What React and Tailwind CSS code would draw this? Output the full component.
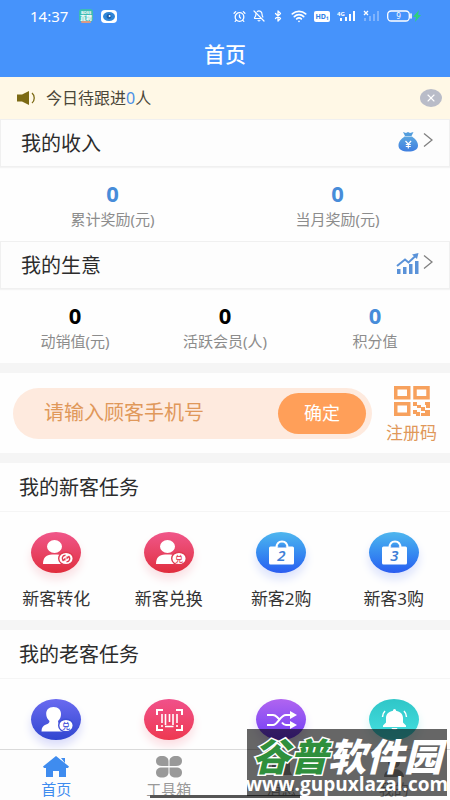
import { useState } from "react";
import { AlarmClock, BellOff, Bluetooth, Wifi, X } from "lucide-react";
import clsx from "clsx";

function StatusBar() {
    return (
        <div className="flex h-8 items-center justify-between pl-[30px] pr-7">
            <div className="flex items-center">
                <span className="w-[49px] text-[15px] leading-5">14:37</span>
                <svg className="h-[14px] w-[14px]" viewBox="0 0 14 14">
                    <rect width="14" height="13" rx="3" fill="#3cbcb4" />
                    <rect x="2" y="12" width="10" height="2" rx="1" fill="#d99a86" />
                    <text x="7" y="5" textAnchor="middle" fontSize="4" fontWeight="700" fill="#fff">BOSS</text>
                    <text x="7" y="11" textAnchor="middle" fontSize="6" fontWeight="700" fill="#fff">直聘</text>
                </svg>
                <svg className="ml-2 h-[13px] w-4" viewBox="0 0 16 13">
                    <rect width="16" height="13" rx="4" fill="#fff" />
                    <ellipse cx="8" cy="6.5" rx="6" ry="4.5" fill="#2f86d8" />
                    <circle cx="8" cy="6.5" r="2.4" fill="#1b5ca8" />
                    <circle cx="8.6" cy="6" r="1" fill="#fff" />
                </svg>
            </div>
            <div className="flex items-center gap-[7px]">
                <AlarmClock className="h-[13px] w-[13px]" strokeWidth={2.4} />
                <BellOff className="h-3 w-3" strokeWidth={2.4} />
                <Bluetooth className="h-3 w-3" strokeWidth={2.6} />
                <Wifi className="h-4 w-4" strokeWidth={2.6} />
                <svg className="h-[11px] w-4" viewBox="0 0 16 11">
                    <rect width="16" height="11" rx="2" fill="#fff" />
                    <text x="8" y="8" textAnchor="middle" fontSize="7" fontWeight="700" fill="#2f7fe8">HD₁</text>
                </svg>
                <svg className="h-3 w-[19px]" viewBox="0 0 19 12" fill="#fff">
                    <text x="0" y="6" fontSize="6" fontWeight="700">4G</text>
                    <rect x="3" y="8" width="2" height="3" />
                    <rect x="8" y="7" width="2" height="4" />
                    <rect x="12" y="4" width="2" height="7" />
                    <rect x="16" y="1" width="2" height="10" />
                </svg>
                <svg className="h-3 w-[17px]" viewBox="0 0 17 12">
                    <path d="M1 1l4 4M5 1l-4 4" stroke="#fff" strokeWidth="1.3" />
                    <g fill="#7fb3fc">
                        <rect x="1" y="8" width="2" height="3" />
                        <rect x="6" y="6" width="2" height="5" />
                        <rect x="10" y="4" width="2" height="7" />
                        <rect x="14" y="1" width="2" height="10" />
                    </g>
                </svg>
                <svg className="h-3 w-[35px]" viewBox="0 0 35 12">
                    <rect x="0.7" y="1" width="21.6" height="10" rx="3.5" fill="none" stroke="#fff" strokeWidth="1.3" />
                    <path d="M24 4v4" stroke="#fff" strokeWidth="1.6" strokeLinecap="round" />
                    <text x="11.5" y="9" textAnchor="middle" fontSize="8" fill="#fff">9</text>
                    <path d="M32 0l-6 7h3l-1 5 6-7h-3z" fill="#2fd07d" />
                </svg>
            </div>
        </div>
    );
}

function MoneyBagIcon() {
    return (
        <svg className="h-[21px] w-[23px]" viewBox="0 0 23 21">
            <defs>
                <linearGradient id="bag" x1="0" y1="0" x2="0" y2="1">
                    <stop offset="0" stopColor="#5ba5e0" />
                    <stop offset="1" stopColor="#3f7fe0" />
                </linearGradient>
            </defs>
            <path d="M7 1l3 1 2-1 2 1 3.5-1-2 4H9z" fill="#529ddd" />
            <path d="M8.5 5.6h7.500C19 8 22 10.500 22 14.500c0 4-4 6-9.800 6S2.500 18.500 2.500 14.500c0-4 3-6.500 6-8.900z" fill="url(#bag)" />
            <path d="M9.500 10l2.800 3 2.800-3M12.300 13v4.500M9.800 13.500h5M9.800 15.500h5" fill="none" stroke="#fff" strokeWidth="1.2" />
        </svg>
    );
}

function ChartIcon() {
    return (
        <svg className="h-[21px] w-[23px]" viewBox="0 0 23 21" fill="#5a92d8">
            <rect x="1" y="16" width="3.5" height="5" />
            <rect x="7" y="14" width="3.5" height="7" />
            <rect x="13" y="11" width="3.5" height="10" />
            <rect x="19" y="8" width="3.5" height="13" />
            <path d="M1 13l8-6.500 3.500 3 7-6.500" fill="none" stroke="#5a92d8" strokeWidth="2" />
            <path d="M16 1.500L22.500 0 21 6z" />
        </svg>
    );
}

function PanelHeader({ title, icon }) {
    return (
        <a
            href="#"
            className="flex h-12 items-center justify-between border border-[#f0f0f0] bg-[#fdfdfd] pl-5 pr-4 shadow-[0_1px_1px_#f4f4f4]"
        >
            <h2 className="pt-[2px] text-[20px] leading-6 text-[#2c2c2c]">{title}</h2>
            <span className="flex items-center gap-1 pb-1">
                {icon}
                <svg className="mb-[2px] h-4 w-[10px]" viewBox="0 0 10 16">
                    <path d="M1 1.500l8 6.500-8 6.500" fill="none" stroke="#808080" strokeWidth="1.3" />
                </svg>
            </span>
        </a>
    );
}

function Stat({ value, label, dark }) {
    return (
        <div className="flex flex-1 flex-col items-center">
            <dd className={clsx("text-[22px] font-bold leading-7", dark ? "text-black" : "text-[#478cd9]")}>{value}</dd>
            <dt className="order-last text-[15px] leading-6 text-[#8c8c8c]">{label}</dt>
        </div>
    );
}

function QrIcon() {
    return (
        <svg className="h-[30px] w-9" viewBox="0 0 36 30">
            <g fill="none" stroke="#f7a15d" strokeWidth="3.5">
                <rect x="1.75" y="1.75" width="13" height="10" />
                <rect x="21" y="1.75" width="13" height="10" />
                <rect x="1.75" y="17.75" width="13" height="10.5" />
            </g>
            <path
                d="M19 16h4v3h4v3h-4v-2h-4zM31 16h5v6h-4v-3h-1zM27 21h4v3h5v6h-9v-3h4v-2h-4zM19 24h4v2h3v4h-4v-2h-3z"
                fill="#f7a15d"
            />
        </svg>
    );
}

function PersonGlyph({ badge, tone, old }) {
    return (
        <>
            {old ? (
                <path
                    d="M22.500 8c5 0 7.500 3 7.500 7 0 3-1 5-3 7 0 2 1 3 3 3.500 3 1 4.500 3 4.500 7H10.500c0-4 1.500-6 4.500-7 2-.5 3.500-1.500 3.500-3.500-2-2-3.300-4-3.300-7 0-4 2.300-7 7.300-7z"
                    fill="#fff"
                />
            ) : (
                <g fill="#fff">
                    <ellipse cx="23.5" cy="14.500" rx="7.5" ry="6.5" />
                    <path d="M12 32c0-6 3-9.500 9-9.500h5c3 0 5 1 6 3V32z" />
                </g>
            )}
            <ellipse cx="35" cy="26.500" rx="7.3" ry="6.3" fill="#fff" stroke={tone} strokeWidth="1.4" />
            {badge ? (
                <text x="35" y="29.5" textAnchor="middle" fontSize="8" fontWeight="500" fill={tone}>{badge}</text>
            ) : (
                <>
                    <path d="M34.500 23.300c-3.500 0-4 3.500-2 5.700M35.500 29.700c3.500 0 4-3.500 2-5.700" fill="none" stroke={tone} strokeWidth="1.4" />
                    <path d="M31 28.500h3.500v-3zM39 24.500h-3.500v3z" fill={tone} />
                </>
            )}
        </>
    );
}

function BagGlyph({ number }) {
    return (
        <>
            <path d="M20.500 16c0-4.500 2-6.500 5.500-6.500s5.500 2 5.500 6.500" fill="none" stroke="#fff" strokeWidth="2" />
            <rect x="13" y="14.5" width="25" height="18" rx="1.5" fill="#fff" />
            <path d="M21.500 15.500c1-3 8-3 9 0" fill="#3f8ce8" />
            <text x="25.5" y="28.500" textAnchor="middle" fontSize="15" fontWeight="600" fontStyle="italic" fill="#3f7fd6">{number}</text>
        </>
    );
}

function BarcodeGlyph() {
    return (
        <g fill="none" stroke="#fff" strokeWidth="2">
            <path d="M13 16v-5h6M32 11h6v5M13 26v5h6M32 31h6v-5" />
            <path d="M18 15v9M18 26v2M21.500 15v11M25.500 15v8M29 15v11M33 15v9M33 26v2M21 27.500h8.500" strokeWidth="1.6" />
        </g>
    );
}

function ShuffleGlyph() {
    return (
        <>
            <path
                d="M11 16h6c2 0 3 1 4 2l2 2M26 23.500c1 1.500 2 2.500 4 2.500h5M11 26h6c5 0 7-10 13-10h5"
                fill="none"
                stroke="#fff"
                strokeWidth="2"
            />
            <path d="M34 12l7 4-7 4zM34 22l7 4-7 4z" fill="#fff" />
        </>
    );
}

function BellGlyph() {
    return (
        <>
            <path
                d="M25.500 10c1 0 1.500.8 1.500 1.800 4.500.8 7 3.700 7 7.200v4.500l3 3v1.500H14v-1.500l3-3V19c0-3.500 2.500-6.400 7-7.200 0-1 .5-1.800 1.500-1.800zM22.500 29h6c-.5 2-5.500 2-6 0z"
                fill="#fff"
            />
            <path d="M16 12c-2 2-2.500 4-2.500 6M35 12c2 2 2.500 4 2.500 6" fill="none" stroke="#fff" strokeWidth="1.5" />
        </>
    );
}

const newTasks = [
    {
        label: "新客转化",
        color: "bg-linear-to-b from-[#f0568a] to-[#e02c3c] shadow-[0_6px_10px_#fadfe3]",
        glyph: <PersonGlyph tone="#df3a50" />,
    },
    {
        label: "新客兑换",
        color: "bg-linear-to-b from-[#f0568a] to-[#e02c3c] shadow-[0_6px_10px_#fadfe3]",
        glyph: <PersonGlyph tone="#df3a50" badge="兑" />,
    },
    {
        label: "新客2购",
        color: "bg-linear-to-b from-[#4fb6ee] to-[#2c5cf0] shadow-[0_6px_10px_#dbe2fc]",
        glyph: <BagGlyph number="2" />,
    },
    {
        label: "新客3购",
        color: "bg-linear-to-b from-[#4fb6ee] to-[#2c5cf0] shadow-[0_6px_10px_#dbe2fc]",
        glyph: <BagGlyph number="3" />,
    },
];

const oldTasks = [
    {
        name: "老客兑换",
        color: "bg-linear-to-b from-[#6a6af0] to-[#3046d0] shadow-[0_6px_10px_#dadcfa]",
        glyph: <PersonGlyph tone="#3f50d8" badge="兑" old />,
    },
    {
        name: "扫码",
        color: "bg-linear-to-b from-[#f0508a] to-[#ee3850] shadow-[0_6px_10px_#fcdde2]",
        glyph: <BarcodeGlyph />,
    },
    {
        name: "转换",
        color: "bg-linear-to-b from-[#b064f0] to-[#7238f4] shadow-[0_6px_10px_#e8dcfc]",
        glyph: <ShuffleGlyph />,
    },
    {
        name: "提醒",
        color: "bg-linear-to-b from-[#2fc6c8] to-[#45e0e0] shadow-[0_6px_10px_#d8f6f6]",
        glyph: <BellGlyph />,
    },
];

function TaskSection({ title, tasks }) {
    return (
        <section className="bg-[#fefefe]">
            <h2 className="border-b border-[#f5f5f5] px-[19px] pb-[11px] pt-[13px] text-[20px] leading-6 text-[#2c2c2c]">{title}</h2>
            <div className="grid grid-cols-4 pb-[9px] pt-5">
                {tasks.map((task) => (
                    <button
                        key={task.label || task.name}
                        type="button"
                        aria-label={task.label || task.name}
                        className="flex flex-col items-center gap-[14px]"
                    >
                        <span className={clsx("h-[41px] w-[50px] rounded-[50%]", task.color)}>
                            <svg className="h-[41px] w-[50px]" viewBox="0 0 50 41">{task.glyph}</svg>
                        </span>
                        {task.label && <span className="text-[17px] leading-6 text-[#333]">{task.label}</span>}
                    </button>
                ))}
            </div>
        </section>
    );
}

const tabs = [
    {
        key: "home",
        label: "首页",
        icon: <path d="M13 0L26 10.500l-1 1.500h-2v9h-7v-6h-6v6H3v-9H1l-1-1.500zM18 2h4v5z" />,
    },
    {
        key: "tools",
        label: "工具箱",
        icon: (
            <path d="M6 0c4 0 6.500 2 6.500 5v5H6c-4 0-6-2-6-5s2-5 6-5zM20 0c4 0 6 2 6 5s-2 5-6 5h-6.500V5c0-3 2.500-5 6.500-5zM6 11.500h6.500v5c0 3-2.500 5-6.500 5s-6-2-6-5 2-5 6-5zM13.500 11.500H20c4 0 6 2 6 5s-2 5-6 5-6.500-2-6.500-5z" />
        ),
    },
    {
        key: "message",
        label: "消息",
        icon: <path d="M13 0c6 0 9 4 9 9v6l2 4H2l2-4V9c0-5 3-9 9-9z" />,
    },
    {
        key: "mine",
        label: "我的",
        icon: <path d="M13 0c4 0 6 3 6 6s-2 6-6 6-6-3-6-6 2-6 6-6zM3 21c0-5 4-8 10-8s10 3 10 8z" />,
    },
];

function TabBar({ active, onChange }) {
    return (
        <nav className="grid h-[51px] shrink-0 grid-cols-4 border-t border-[#dadada] bg-[#fdfdfd]">
            {tabs.map((tab) => (
                <button
                    key={tab.key}
                    type="button"
                    onClick={() => onChange(tab.key)}
                    className={clsx(
                        "flex flex-col items-center gap-px pt-[6px] text-[15px] leading-5",
                        tab.key === active ? "text-[#3f8cef]" : "text-[#999]"
                    )}
                >
                    <svg className="h-[22px] w-[26px] shrink-0" viewBox="0 0 26 22" fill="currentColor">{tab.icon}</svg>
                    {tab.label}
                </button>
            ))}
        </nav>
    );
}

function Watermark() {
    return (
        <div className="pointer-events-none absolute bottom-1 right-[3px] flex h-[67px] w-[200px] flex-col items-center whitespace-nowrap bg-black/60 pt-[7px] text-white">
            <p className="text-[38px] font-black italic leading-10">
                <span className="text-[#2f8f3c] [-webkit-text-stroke:3px_#fff] [paint-order:stroke_fill]">谷普</span>
                软件园
            </p>
            <p className="font-['Open_Sans'] text-[19px] font-bold leading-4">www.gupuxlazal.com</p>
        </div>
    );
}

export default function App() {
    const [tab, setTab] = useState("home");
    const [showNotice, setShowNotice] = useState(true);
    const [phone, setPhone] = useState("");

    return (
        <div className="relative flex h-screen flex-col overflow-hidden bg-[#f5f5f5] font-['Noto_Sans','Noto_Sans_CJK_SC',sans-serif]">
            <header className="h-[77px] shrink-0 bg-[#4693fb] text-white">
                <StatusBar />
                <h1 className="pt-2 text-center text-[21px] font-medium leading-7">首页</h1>
            </header>

            <main className="min-h-0 flex-1 overflow-y-auto [scrollbar-width:none]">
                {showNotice && (
                    <div className="flex h-[42px] items-center bg-[#fff8e6] pl-[17px] pr-2">
                        <svg className="mr-[10px] h-[14px] w-[19px]" viewBox="0 0 19 14">
                            <path d="M0 3.500h5L12 0v14l-7-3.500H0z" fill="#7c6a14" />
                            <path d="M15 2c3 2.500 3 7.500 0 10" fill="none" stroke="#7c6a14" strokeWidth="1.3" />
                        </svg>
                        <p className="flex-1 text-[16px] leading-6 text-[#4a4638]">
                            今日待跟进<span className="text-[#4a8fe6]">0</span>人
                        </p>
                        <button
                            type="button"
                            aria-label="关闭"
                            onClick={() => setShowNotice(false)}
                            className="flex h-[18px] w-[22px] items-center justify-center rounded-[50%] bg-[#b9bcc8] text-white"
                        >
                            <X className="h-3 w-3" strokeWidth={2.2} />
                        </button>
                    </div>
                )}

                <section className="bg-[#fefefe]">
                    <PanelHeader title="我的收入" icon={<MoneyBagIcon />} />
                    <dl className="flex h-[74px] pt-3">
                        <Stat value="0" label="累计奖励(元)" />
                        <Stat value="0" label="当月奖励(元)" />
                    </dl>
                </section>

                <section className="bg-[#fefefe]">
                    <PanelHeader title="我的生意" icon={<ChartIcon />} />
                    <dl className="flex h-[74px] pt-3">
                        <Stat value="0" label="动销值(元)" dark />
                        <Stat value="0" label="活跃会员(人)" dark />
                        <Stat value="0" label="积分值" />
                    </dl>
                </section>

                <section className="my-[10px] flex h-20 items-center bg-[#fefefe] px-[13px]">
                    <form
                        onSubmit={(e) => e.preventDefault()}
                        className="flex h-[51px] min-w-0 flex-1 items-center rounded-full bg-[#feeade] pl-[31px] pr-[6px]"
                    >
                        <input
                            type="tel"
                            aria-label="请输入顾客手机号"
                            placeholder="请输入顾客手机号"
                            value={phone}
                            onChange={(e) => setPhone(e.target.value)}
                            className="min-w-0 flex-1 bg-transparent text-[20px] leading-6 text-[#e0985a] outline-none placeholder:text-[#e0985a]"
                        />
                        <button type="submit" className="h-[41px] w-[88px] rounded-full bg-[#ff9f59] text-[18px] leading-6 text-white">
                            确定
                        </button>
                    </form>
                    <button type="button" className="ml-[14px] flex flex-col items-center gap-[5px] pt-[5px] text-[17px] leading-6 text-[#e0985a]">
                        <QrIcon />
                        注册码
                    </button>
                </section>

                <TaskSection title="我的新客任务" tasks={newTasks} />
                <div className="h-[10px]" />
                <TaskSection title="我的老客任务" tasks={oldTasks} />
            </main>

            <TabBar active={tab} onChange={setTab} />
            <div className="absolute bottom-[2px] left-1/3 h-[3px] w-1/3 bg-[#555]" />
            <Watermark />
        </div>
    );
}
